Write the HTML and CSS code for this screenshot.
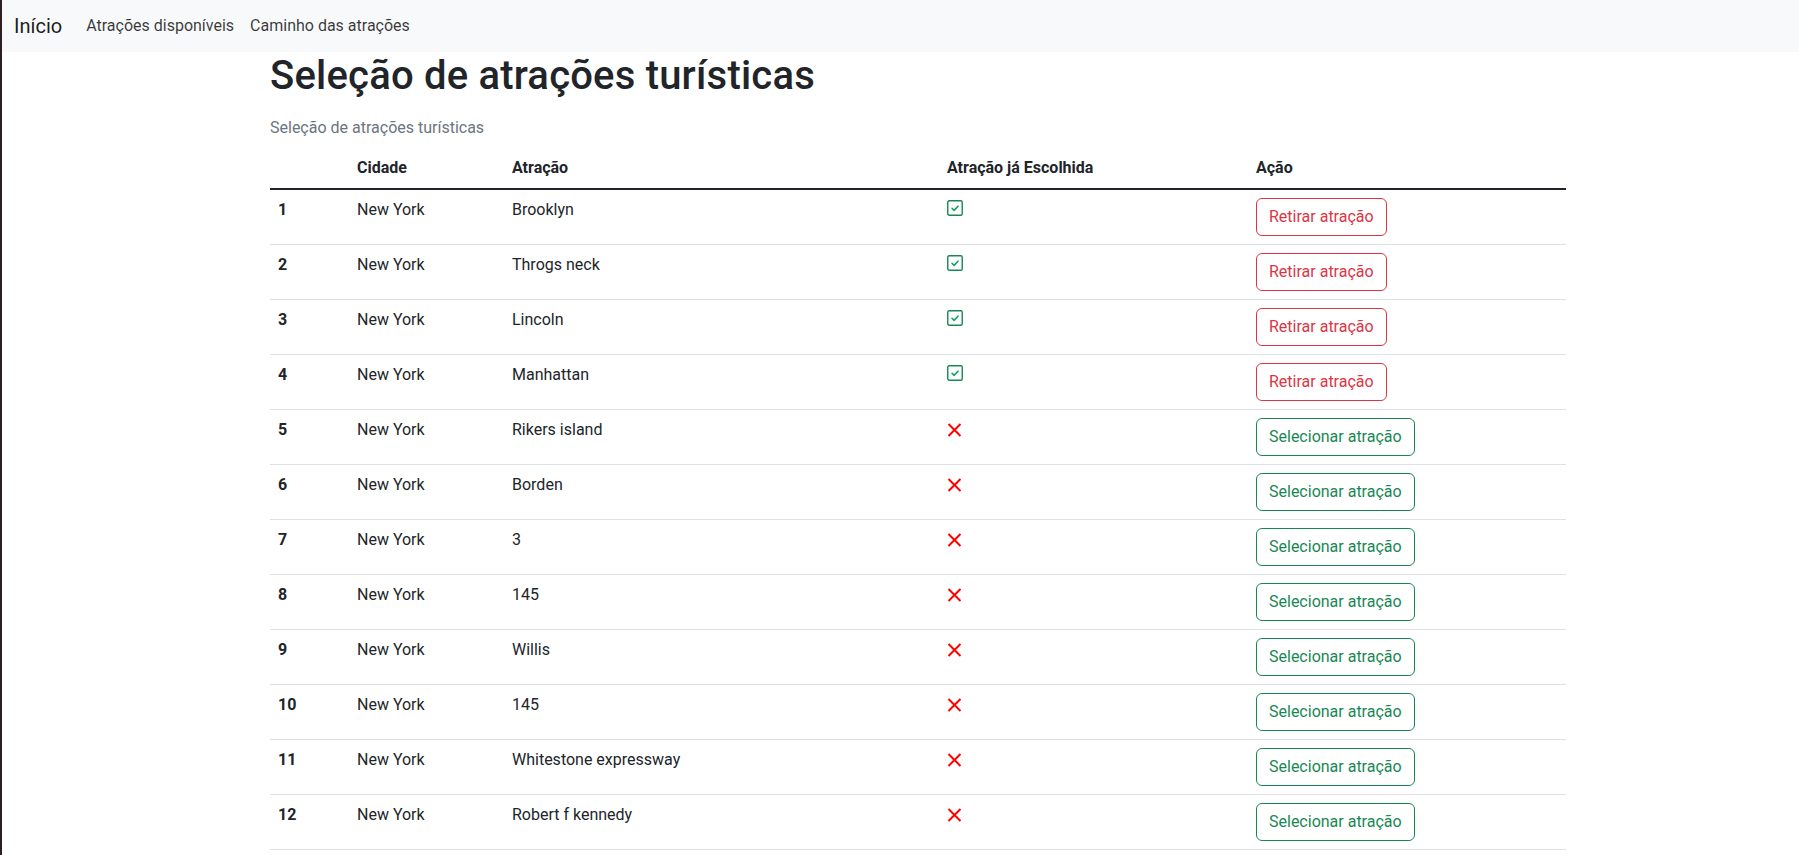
FILE: index.html
```html
<!DOCTYPE html>
<html lang="pt">
<head>
<meta charset="utf-8">
<title>Seleção de atrações turísticas</title>
<link rel="stylesheet" href="styles.css">
</head>
<body>
<nav class="navbar">
  <a class="brand" href="#">Início</a>
  <ul class="nav">
    <li><a class="nav-link" href="#">Atrações disponíveis</a></li>
    <li><a class="nav-link" href="#">Caminho das atrações</a></li>
  </ul>
</nav>
<main class="container">
  <h1 class="title">Seleção de atrações turísticas</h1>
  <table class="table">
    <caption>Seleção de atrações turísticas</caption>
    <colgroup>
      <col class="c-num"><col class="c-city"><col class="c-attr"><col class="c-chosen"><col class="c-action">
    </colgroup>
    <thead>
      <tr><th></th><th>Cidade</th><th>Atração</th><th>Atração já Escolhida</th><th>Ação</th></tr>
    </thead>
    <tbody>
      <tr><th>1</th><td>New York</td><td>Brooklyn</td><td><svg class="ico-check" viewBox="0 0 16 16"><rect x="0.75" y="0.75" width="14.5" height="14.5" rx="1.5"/><path d="M5 8.3 L7.1 10.4 L11 6.2"/></svg></td><td><button class="btn btn-danger">Retirar atração</button></td></tr>
      <tr><th>2</th><td>New York</td><td>Throgs neck</td><td><svg class="ico-check" viewBox="0 0 16 16"><rect x="0.75" y="0.75" width="14.5" height="14.5" rx="1.5"/><path d="M5 8.3 L7.1 10.4 L11 6.2"/></svg></td><td><button class="btn btn-danger">Retirar atração</button></td></tr>
      <tr><th>3</th><td>New York</td><td>Lincoln</td><td><svg class="ico-check" viewBox="0 0 16 16"><rect x="0.75" y="0.75" width="14.5" height="14.5" rx="1.5"/><path d="M5 8.3 L7.1 10.4 L11 6.2"/></svg></td><td><button class="btn btn-danger">Retirar atração</button></td></tr>
      <tr><th>4</th><td>New York</td><td>Manhattan</td><td><svg class="ico-check" viewBox="0 0 16 16"><rect x="0.75" y="0.75" width="14.5" height="14.5" rx="1.5"/><path d="M5 8.3 L7.1 10.4 L11 6.2"/></svg></td><td><button class="btn btn-danger">Retirar atração</button></td></tr>
      <tr><th>5</th><td>New York</td><td>Rikers island</td><td><svg class="ico-x" viewBox="0 0 15 14"><path d="M1.5 1 L13.5 13 M13.5 1 L1.5 13"/></svg></td><td><button class="btn btn-success">Selecionar atração</button></td></tr>
      <tr><th>6</th><td>New York</td><td>Borden</td><td><svg class="ico-x" viewBox="0 0 15 14"><path d="M1.5 1 L13.5 13 M13.5 1 L1.5 13"/></svg></td><td><button class="btn btn-success">Selecionar atração</button></td></tr>
      <tr><th>7</th><td>New York</td><td>3</td><td><svg class="ico-x" viewBox="0 0 15 14"><path d="M1.5 1 L13.5 13 M13.5 1 L1.5 13"/></svg></td><td><button class="btn btn-success">Selecionar atração</button></td></tr>
      <tr><th>8</th><td>New York</td><td>145</td><td><svg class="ico-x" viewBox="0 0 15 14"><path d="M1.5 1 L13.5 13 M13.5 1 L1.5 13"/></svg></td><td><button class="btn btn-success">Selecionar atração</button></td></tr>
      <tr><th>9</th><td>New York</td><td>Willis</td><td><svg class="ico-x" viewBox="0 0 15 14"><path d="M1.5 1 L13.5 13 M13.5 1 L1.5 13"/></svg></td><td><button class="btn btn-success">Selecionar atração</button></td></tr>
      <tr><th>10</th><td>New York</td><td>145</td><td><svg class="ico-x" viewBox="0 0 15 14"><path d="M1.5 1 L13.5 13 M13.5 1 L1.5 13"/></svg></td><td><button class="btn btn-success">Selecionar atração</button></td></tr>
      <tr><th>11</th><td>New York</td><td>Whitestone expressway</td><td><svg class="ico-x" viewBox="0 0 15 14"><path d="M1.5 1 L13.5 13 M13.5 1 L1.5 13"/></svg></td><td><button class="btn btn-success">Selecionar atração</button></td></tr>
      <tr><th>12</th><td>New York</td><td>Robert f kennedy</td><td><svg class="ico-x" viewBox="0 0 15 14"><path d="M1.5 1 L13.5 13 M13.5 1 L1.5 13"/></svg></td><td><button class="btn btn-success">Selecionar atração</button></td></tr>
    </tbody>
  </table>
</main>
</body>
</html>
```
FILE: styles.css
```css
html {
  overflow: hidden;
}
body {
  margin: 0;
  border-left: 2px solid #2b1e25;
  min-height: 855px;
  box-sizing: border-box;
  font-family: Roboto, "Liberation Sans", sans-serif;
  font-size: 16px;
  line-height: 24px;
  color: #212529;
  background: #fff;
}
.navbar {
  display: flex;
  align-items: center;
  height: 52px;
  padding: 0 12px;
  background: #f8f9fa;
}
.brand {
  font-size: 20px;
  line-height: 30px;
  color: rgba(0, 0, 0, 0.9);
  text-decoration: none;
  margin-right: 16px;
}
.nav {
  display: flex;
  list-style: none;
  margin: 0;
  padding: 0;
}
.nav-link {
  display: block;
  padding: 8px;
  color: rgba(0, 0, 0, 0.78);
  text-decoration: none;
}
.container {
  width: 1320px;
  margin-left: 256px;
  padding: 0 12px;
  box-sizing: border-box;
}
.title {
  margin: 0 0 8px;
  font-size: 40px;
  font-weight: 500;
  line-height: 48px;
  letter-spacing: 0.2px;
}
.table {
  width: 100%;
  border-collapse: collapse;
  table-layout: fixed;
}
.table caption {
  caption-side: top;
  text-align: left;
  padding: 8px 0;
  color: #6c757d;
}
.c-num { width: 79px; }
.c-city { width: 155px; }
.c-attr { width: 435px; }
.c-chosen { width: 309px; }
.table th,
.table td {
  padding: 8px;
  text-align: left;
  vertical-align: top;
  border-bottom: 1px solid #dee2e6;
}
.table th {
  font-weight: 700;
}
.table thead th {
  border-bottom: 2px solid #212529;
}
.ico-check {
  display: block;
  width: 16px;
  height: 16px;
  margin-top: 2px;
  fill: none;
}
.ico-check rect {
  stroke: #198754;
  stroke-width: 1.4;
}
.ico-check path {
  stroke: #14a06a;
  stroke-width: 1.6;
  stroke-linecap: round;
  stroke-linejoin: round;
}
.ico-x {
  display: block;
  width: 15px;
  height: 14px;
  margin-top: 5px;
  fill: none;
  stroke: #f00;
  stroke-width: 2;
}
.btn {
  display: inline-block;
  font: inherit;
  line-height: 24px;
  padding: 6px 12px;
  background: transparent;
  border: 1px solid;
  border-radius: 6px;
  cursor: pointer;
}
.btn-danger {
  color: #dc3545;
  border-color: #dc3545;
}
.btn-success {
  color: #198754;
  border-color: #198754;
}
```
